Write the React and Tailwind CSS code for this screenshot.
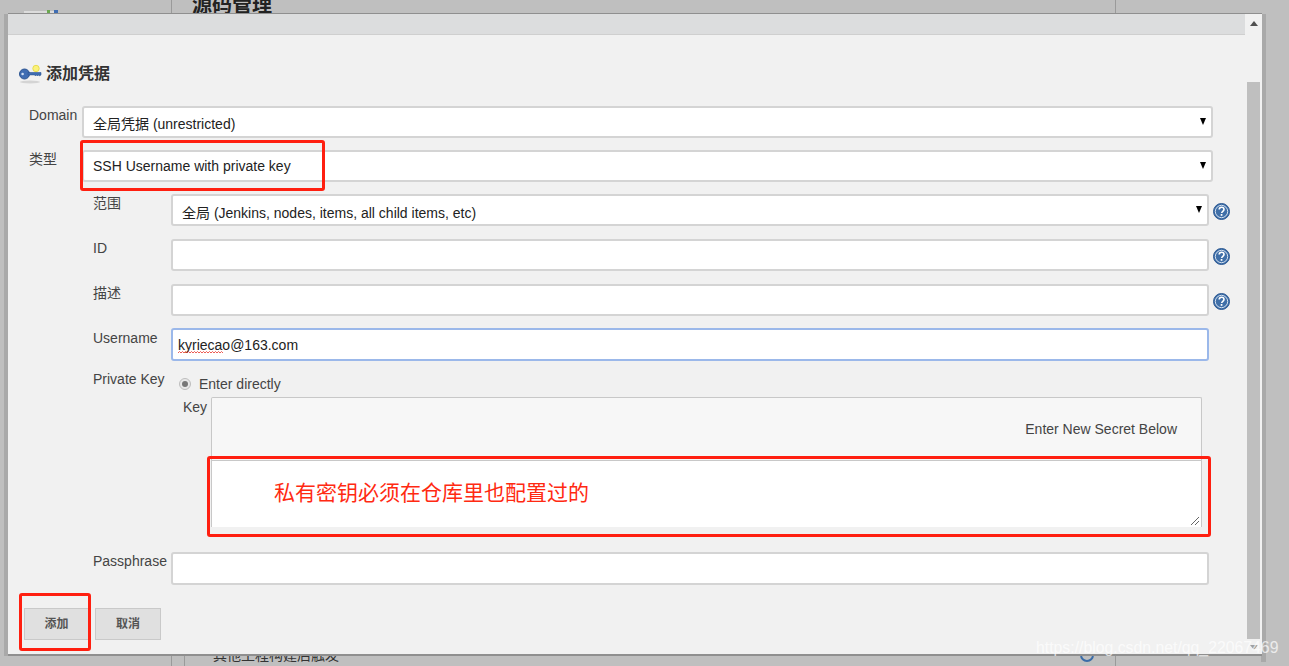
const font = { fontFamily: '"Liberation Sans", "Noto Sans CJK SC", sans-serif' };

function Caret() {
  return <span className="absolute right-[5px] top-[10px] w-0 h-0 border-x-[3px] border-x-transparent border-t-[7px] border-t-black" />;
}

function Help() {
  return (
    <svg width="17" height="17" viewBox="0 0 17 17" className="shrink-0 ml-[4px]">
      <circle cx="8.5" cy="8.5" r="8" fill="#3a6ca8" stroke="#2f5a92" />
      <circle cx="8.5" cy="8.5" r="6.2" fill="#3f6fa8" stroke="#d5e0ee" strokeWidth="1" />
      <path d="M6.2 6.6c0-1.5 1-2.3 2.4-2.3s2.4.8 2.4 2.1c0 1.8-2.3 1.9-2.3 3.6" fill="none" stroke="#fff" strokeWidth="1.6" />
      <rect x="7.7" y="11" width="1.7" height="1.8" fill="#fff" />
    </svg>
  );
}

function Select({ children, className = "" }) {
  return (
    <div className={`relative bg-white border-2 border-[#d4d4d4] rounded-[3px] h-[32px] pl-[9px] text-[14px] text-[#222] ${className}`}>
      {children}
      <Caret />
    </div>
  );
}

function Row({ label, children, help, className = "", labelClass = "" }) {
  return (
    <div className={`flex ${className}`}>
      <div className={`w-[78px] shrink-0 text-[14px] leading-[18px] text-[#444] ${labelClass}`}>{label}</div>
      <div className="w-[1038px] shrink-0">{children}</div>
      {help && <div className="self-center pt-[3px]"><Help /></div>}
    </div>
  );
}

function Input({ children, focus, tall }) {
  return (
    <div className={`bg-white rounded-[3px] border-2 pl-[5px] text-[14px] text-[#222] ${focus ? "h-[33px] leading-[31px] border-[#9bb8ea]" : tall ? "h-[33px] border-[#d4d4d4]" : "h-[32px] leading-[28px] border-[#d4d4d4]"}`}>
      {children}
    </div>
  );
}

function Box({ className }) {
  return <div className={`absolute border-[3px] border-[#ff1f10] rounded-[3px] ${className}`} />;
}

export default function App() {
  return (
    <div style={font} className="relative w-[1289px] h-[666px] overflow-hidden bg-[#bfbfbf]">
      {/* page behind the dialog */}
      <div className="absolute left-[171px] top-0 w-[945px] h-[13px] border-x border-[#9a9a9a]">
        <div className="pl-[20px] mt-[-7px] text-[20px] font-bold leading-[24px] text-[#222]">源码管理</div>
      </div>
      <div className="absolute left-[171px] top-[655px] w-[14px] h-[11px] border-x border-[#9a9a9a]" />
      <div className="absolute left-[194px] top-[651px] w-[12px] h-[5px] bg-[#777]" />
      <div className="absolute left-[213px] top-[647px] text-[14px] leading-[16px] text-[#333]">其他工程构建后触发</div>
      <div className="absolute left-[1080px] top-[648px] w-[14px] h-[14px] rounded-full border-2 border-[#3a6ca8]" />
      <div className="absolute left-[1115px] top-[655px] w-px h-[11px] bg-[#9a9a9a]" />
      <div className="absolute left-[4px] top-[14px] w-[5px] h-[642px] bg-[#a9a9a9]" />
      <div className="absolute left-[1261px] top-[14px] w-[5px] h-[648px] bg-[#a9a9a9]" />
      <div className="absolute left-[24px] top-[11px] w-[30px] h-[2px] bg-[#dcdcdc]" />
      <div className="absolute left-[47px] top-[10px] w-[3px] h-[3px] bg-[#6aa84f]" />
      <div className="absolute left-[54px] top-[10px] w-[4px] h-[3px] bg-[#3f6db3]" />

      {/* dialog */}
      <div className="absolute left-[8px] top-[13px] w-[1254px] h-[643px] flex bg-[#f1f1f1] border-t border-b-2 border-[#8f8f8f]">
        <div className="w-[1237px] shrink-0 flex flex-col">
          <div className="h-[21px] shrink-0 bg-[#dcddde] border-b border-[#cfcfcf]" />
          <div className="pl-[11px] pt-[15px] flex items-center h-[47px] text-[#333] box-content">
            <svg width="23" height="20" viewBox="0 0 23 20">
              <ellipse cx="11" cy="18" rx="10" ry="1.5" fill="#d4d4d4" />
              <circle cx="17" cy="4.5" r="3.2" fill="#fbf27a" stroke="#e8dc50" />
              <circle cx="5.5" cy="10" r="5" fill="#3f6db3" stroke="#2d5592" />
              <circle cx="3.6" cy="10" r="1.3" fill="#cfe0f5" />
              <path d="M9 8.5h13v2.4l-1.5 1-1-1-1 1-1-1-1 1-1-1H9z" fill="#3f6db3" stroke="#2d5592" strokeWidth=".6" />
            </svg>
            <span className="ml-[4px] text-[16px] leading-[20px] font-bold text-[#333]">添加凭据</span>
          </div>

          <div className="pl-[21px] pt-[9px] flex flex-col">
            <div className="flex h-[32px]">
              <div className="w-[53px] shrink-0 text-[14px] leading-[18px] text-[#444]">Domain</div>
              <Select className="w-[1131px] leading-[32px]">全局凭据 (unrestricted)</Select>
            </div>
            <div className="flex h-[32px] mt-[12px]">
              <div className="w-[53px] shrink-0 text-[14px] leading-[18px] text-[#444]">类型</div>
              <Select className="w-[1131px] leading-[28px]">SSH Username with private key</Select>
            </div>

            <div className="pl-[64px] flex flex-col">
              <Row label="范围" help className="mt-[12px]"><Select className="leading-[34px]">全局 (Jenkins, nodes, items, all child items, etc)</Select></Row>
              <Row label="ID" help className="mt-[13px]"><Input /></Row>
              <Row label="描述" help className="mt-[13px]"><Input /></Row>
              <Row label="Username" labelClass="pt-[1px]" className="mt-[12px]">
                <div className="relative">
                  <Input focus>kyriecao@163.com</Input>
                  <svg width="46" height="3" viewBox="0 0 46 3" className="absolute left-[7px] top-[23px]">
                    <path d="M0 2 1.5 0.5 3 2 4.5 0.5 6 2 7.5 0.5 9 2 10.5 0.5 12 2 13.5 0.5 15 2 16.5 0.5 18 2 19.5 0.5 21 2 22.5 0.5 24 2 25.5 0.5 27 2 28.5 0.5 30 2 31.5 0.5 33 2 34.5 0.5 36 2 37.5 0.5 39 2 40.5 0.5 42 2 43.5 0.5 45 2" fill="none" stroke="#e8342a" strokeWidth="0.8" />
                  </svg>
                </div>
              </Row>

              <div className="flex mt-[9px]">
                <div className="w-[78px] shrink-0 text-[14px] leading-[18px] text-[#444]">Private Key</div>
                <div className="flex flex-col">
                  <div className="flex items-center h-[18px] mt-[5px] text-[14px] text-[#444]">
                    <span className="ml-[8px] w-[12px] h-[12px] rounded-full bg-[#e8e8e8] border border-[#bdbdbd] flex items-center justify-center">
                      <span className="w-[6px] h-[6px] rounded-full bg-[#777]" />
                    </span>
                    <span className="ml-[8px]">Enter directly</span>
                  </div>
                  <div className="flex mt-[4px]">
                    <div className="w-[40px] pl-[12px] shrink-0 text-[14px] leading-[18px] text-[#444] pt-[1px]">Key</div>
                    <div className="w-[991px] h-[130px] border-x border-t border-[#c8c8c8] rounded-t-[2px] bg-[#f7f7f7] flex flex-col">
                      <div className="h-[62px] text-right pr-[24px] pt-[22px] text-[14px] leading-[18px] text-[#444] shrink-0">Enter New Secret Below</div>
                      <div className="relative flex-1 bg-white border-t border-[#c8c8c8] flex items-start">
                        <div className="pl-[62px] pt-[18px] text-[21px] leading-[28px] text-[#ff2a12]">私有密钥必须在仓库里也配置过的</div>
                        <svg width="10" height="10" className="absolute right-[1px] bottom-[1px]" viewBox="0 0 10 10">
                          <path d="M1 9 9 1M5 9 9 5" stroke="#666" strokeWidth="1" />
                        </svg>
                      </div>
                    </div>
                  </div>
                </div>
              </div>

              <Row label="Passphrase" className="mt-[25px]"><Input tall /></Row>
            </div>

            <div className="flex gap-[6px] mt-[23px] ml-[-5px]">
              <div className="w-[65px] h-[32px] bg-[#e0e0e0] border border-[#c9c9c9] text-center text-[12px] font-bold leading-[30px] text-[#555]">添加</div>
              <div className="w-[66px] h-[32px] bg-[#e0e0e0] border border-[#c9c9c9] text-center text-[12px] font-bold leading-[30px] text-[#555]">取消</div>
            </div>
          </div>
        </div>

        {/* scrollbar */}
        <div className="relative w-[17px] shrink-0 flex flex-col items-center">
          <span className="mt-[7px] w-0 h-0 border-x-[4px] border-x-transparent border-b-[5px] border-b-[#505050]" />
          <div className="mt-[56px] w-[13px] h-[557px] bg-[#bfbfbf]" />
          <span className="mt-[6px] w-0 h-0 border-x-[4px] border-x-transparent border-t-[5px] border-t-[#a0a0a0]" />
        </div>
      </div>

      {/* annotations */}
      <Box className="left-[80px] top-[140px] w-[245px] h-[51px]" />
      <Box className="left-[207px] top-[456px] w-[1004px] h-[81px]" />
      <Box className="left-[19px] top-[593px] w-[72px] h-[58px]" />
      <div className="absolute left-[1036px] top-[638px] text-[15.8px] leading-[20px] text-white/70">https://blog.csdn.net/qq_22067469</div>
    </div>
  );
}
